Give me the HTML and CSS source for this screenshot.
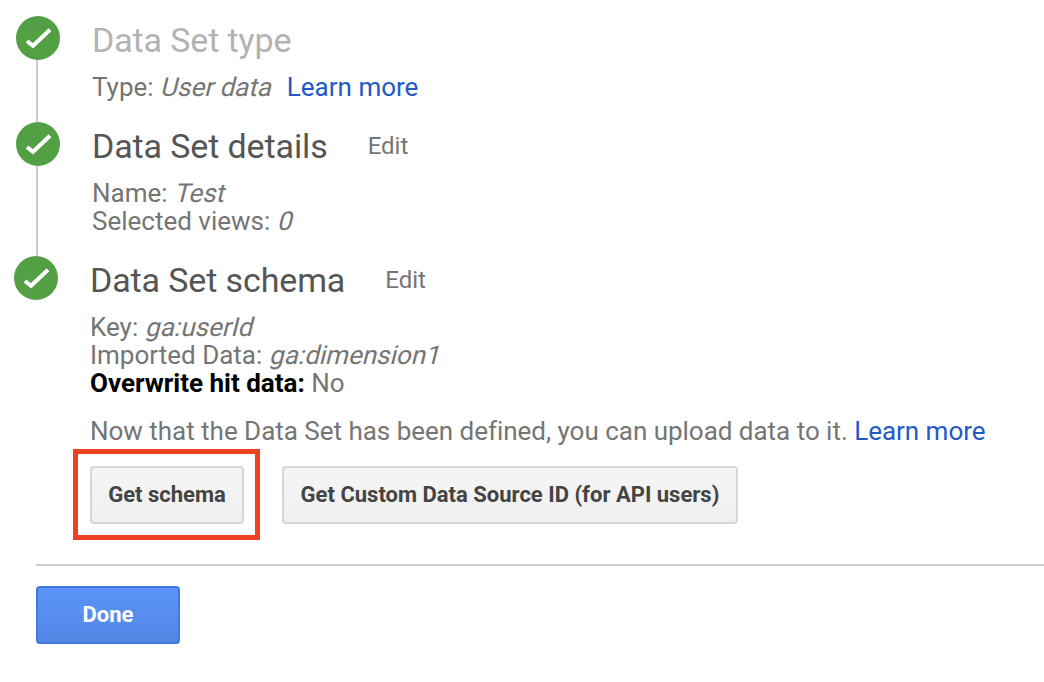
FILE: index.html
```html
<!DOCTYPE html>
<html lang="en">
<head>
<meta charset="utf-8">
<title>Data Set</title>
<link rel="stylesheet" href="styles.css">
</head>
<body>
<svg class="defs" width="0" height="0"><defs>
<symbol id="check" viewBox="0 0 44 44"><circle cx="22" cy="22" r="22" fill="#53a044"/><path d="M11 25L17 29.800L34 13.800" fill="none" stroke="#fff" stroke-width="4"/></symbol>
</defs></svg>
<main class="wizard">
<section class="step step-type">
<div class="rail"><svg class="badge"><use href="#check"/></svg></div>
<div class="content">
<div class="head"><h2 class="muted">Data Set type</h2></div>
<p>Type: <i>User data</i><a class="more">Learn more</a></p>
</div>
</section>
<section class="step step-details">
<div class="rail"><svg class="badge"><use href="#check"/></svg></div>
<div class="content">
<div class="head"><h2>Data Set details</h2><span class="edit">Edit</span></div>
<p>Name: <i>Test</i></p>
<p>Selected views: <i>0</i></p>
</div>
</section>
<section class="step step-schema">
<div class="rail"><svg class="badge"><use href="#check"/></svg></div>
<div class="content">
<div class="head"><h2>Data Set schema</h2><span class="edit">Edit</span></div>
<p>Key: <i>ga:userId</i></p>
<p>Imported Data: <i>ga:dimension1</i></p>
<p><b>Overwrite hit data:</b> No</p>
<p class="note">Now that the Data Set has been defined, you can upload data to it. <a>Learn more</a></p>
<div class="actions"><div class="highlight"><button class="btn schema">Get schema</button></div><button class="btn source">Get Custom Data Source ID (for API users)</button></div>
</div>
</section>
<footer><button class="btn done">Done</button></footer>
</main>
</body>
</html>
```
FILE: styles.css
```css
* { box-sizing: border-box; }
body { margin: 0; background: #fff; color: #757575; font-family: Roboto, sans-serif; font-size: 26px; }
.defs { position: absolute; }
.wizard { padding-top: 16px; width: 1044px; height: 682px; overflow: hidden; }
.step { display: flex; padding-left: 16px; }
.step-type { height: 106px; }
.step-details { height: 134px; }
.step-schema { height: 308px; padding-left: 14px; }
.rail { width: 44px; margin-right: 32px; flex: none; display: flex; flex-direction: column; }
.step:not(.step-schema) .rail::after { content: ""; width: 2px; flex: 1; margin-left: 20px; background: #c9c9c9; }
.badge { width: 44px; height: 44px; flex: none; display: block; }
.content { flex: 1; }
.head { display: flex; align-items: center; height: 48px; margin-bottom: 9px; }
h2 { margin: 0; font-size: 34px; letter-spacing: -0.12px; font-weight: 400; color: #555; white-space: nowrap; }
.muted { color: #b3b3b3; }
.edit { margin-left: 40px; font-size: 24px; }
p { margin: 0; height: 28px; line-height: 28px; white-space: nowrap; }
/* Slanted upright letterforms keep the regular face's widths. */
i { display: inline-block; font-style: normal; transform: skewX(-14deg); transform-origin: 0 80%; }
a { color: #2259c7; }
.more { margin-left: 16px; }
b { color: #000; font-weight: 700; }
.note { margin-top: 20px; letter-spacing: -0.02px; }
.actions { display: flex; align-items: flex-start; gap: 22px; margin: 4px 0 0 -17px; }
.highlight { border: 5px solid #ed4124; width: 187px; height: 91px; padding: 12px; }
.btn { font-family: inherit; font-size: 22px; font-weight: 700; height: 58px; border: 2px solid #d7d7d7; border-radius: 4px; background: linear-gradient(#f5f5f5, #f0f0f0); color: #444; padding: 0 0 2px; white-space: nowrap; display: block; }
.schema { width: 154px; }
.source { width: 456px; margin-top: 17px; }
footer { margin-left: 36px; border-top: 2px solid #ccc; padding-top: 20px; }
.done { width: 144px; color: #fff; background: linear-gradient(#5b93f8, #5287e4); border-color: #4079e6; }
```
